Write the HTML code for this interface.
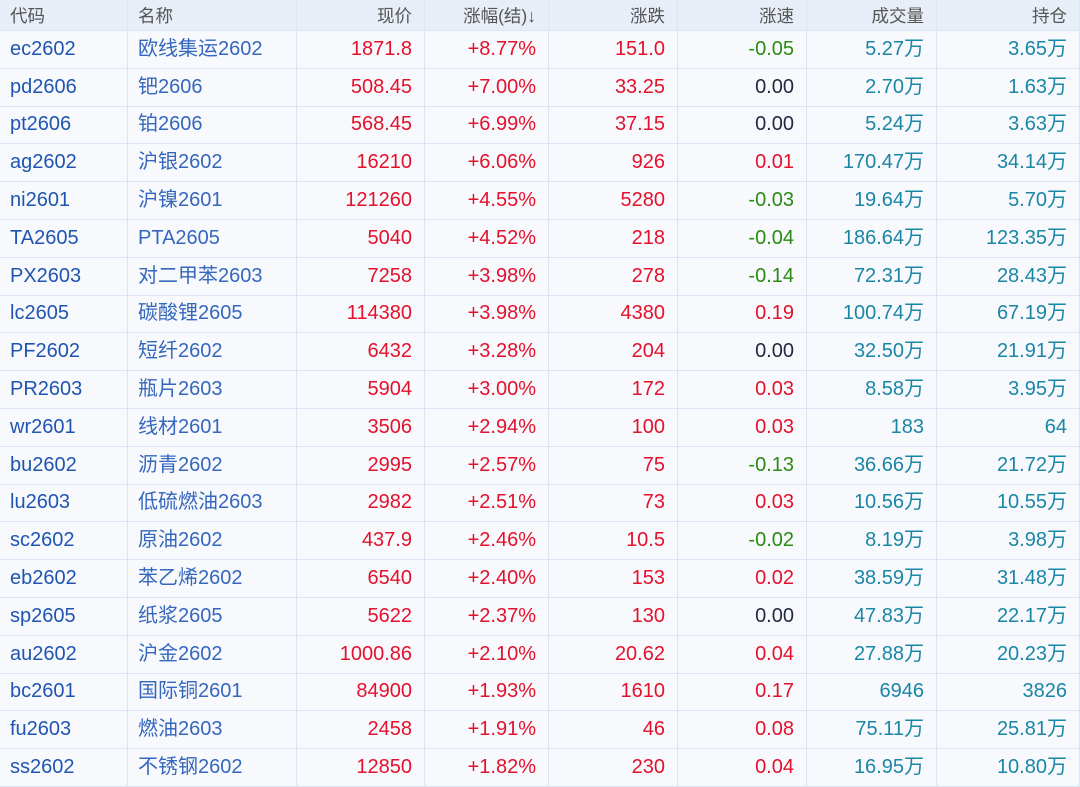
<!DOCTYPE html><html><head><meta charset="utf-8"><style>
body{margin:0;width:1080px;height:786px;overflow:hidden;background:#f7f9fd;font-family:"Liberation Sans","Noto Sans CJK SC",sans-serif;}
.r{position:absolute;left:0;width:1080px;border-bottom:1px solid #dbe4f2;box-sizing:border-box}
.c{position:absolute;top:0;bottom:0;border-right:1px solid #dbe4f2;box-sizing:border-box;font-size:20px;white-space:nowrap;line-height:36px;overflow:hidden}
.c span{display:inline-block;vertical-align:middle;line-height:24px}
.h{background:#e7eef8}
.h .c{color:#555;font-size:17.5px;line-height:30px}
.R{text-align:right;padding-right:12px}
.L{padding-left:10px}
.cd{color:#1f55b0}.nm{color:#3567bd}.red{color:#e3112b}.grn{color:#2a8a12}.blk{color:#1f2940}.tl{color:#1a86a6}
</style></head><body><div id="t"></div>
<script>
const X=[0,128,297,425,549,678,807,937,1080];
const rows=[
["ec2602","欧线集运2602","1871.8","+8.77%","151.0","-0.05","5.27万","3.65万"],
["pd2606","钯2606","508.45","+7.00%","33.25","0.00","2.70万","1.63万"],
["pt2606","铂2606","568.45","+6.99%","37.15","0.00","5.24万","3.63万"],
["ag2602","沪银2602","16210","+6.06%","926","0.01","170.47万","34.14万"],
["ni2601","沪镍2601","121260","+4.55%","5280","-0.03","19.64万","5.70万"],
["TA2605","PTA2605","5040","+4.52%","218","-0.04","186.64万","123.35万"],
["PX2603","对二甲苯2603","7258","+3.98%","278","-0.14","72.31万","28.43万"],
["lc2605","碳酸锂2605","114380","+3.98%","4380","0.19","100.74万","67.19万"],
["PF2602","短纤2602","6432","+3.28%","204","0.00","32.50万","21.91万"],
["PR2603","瓶片2603","5904","+3.00%","172","0.03","8.58万","3.95万"],
["wr2601","线材2601","3506","+2.94%","100","0.03","183","64"],
["bu2602","沥青2602","2995","+2.57%","75","-0.13","36.66万","21.72万"],
["lu2603","低硫燃油2603","2982","+2.51%","73","0.03","10.56万","10.55万"],
["sc2602","原油2602","437.9","+2.46%","10.5","-0.02","8.19万","3.98万"],
["eb2602","苯乙烯2602","6540","+2.40%","153","0.02","38.59万","31.48万"],
["sp2605","纸浆2605","5622","+2.37%","130","0.00","47.83万","22.17万"],
["au2602","沪金2602","1000.86","+2.10%","20.62","0.04","27.88万","20.23万"],
["bc2601","国际铜2601","84900","+1.93%","1610","0.17","6946","3826"],
["fu2603","燃油2603","2458","+1.91%","46","0.08","75.11万","25.81万"],
["ss2602","不锈钢2602","12850","+1.82%","230","0.04","16.95万","10.80万"]];
let h='';
function row(top,ht,cells,cls,hdr){
 h+=`<div class="r ${hdr?'h':''}" style="top:${top}px;height:${ht}px">`;
 cells.forEach((v,i)=>{h+=`<div class="c ${i<2?'L':'R'} ${cls[i]}" style="left:${X[i]}px;width:${X[i+1]-X[i]}px"><span>${v}</span></div>`});
 h+='</div>';
}
row(0,31,["代码","名称","现价","涨幅(结)↓","涨跌","涨速","成交量","持仓"],["","","","","","","",""],1);
rows.forEach((r,k)=>{
 const s=parseFloat(r[5]);const sc=s>0?'red':s<0?'grn':'blk';
 row(30+k*37.8,38.8,r,["cd","nm","red","red","red",sc,"tl","tl"]);
});
document.getElementById('t').innerHTML=h;
</script></body></html>
